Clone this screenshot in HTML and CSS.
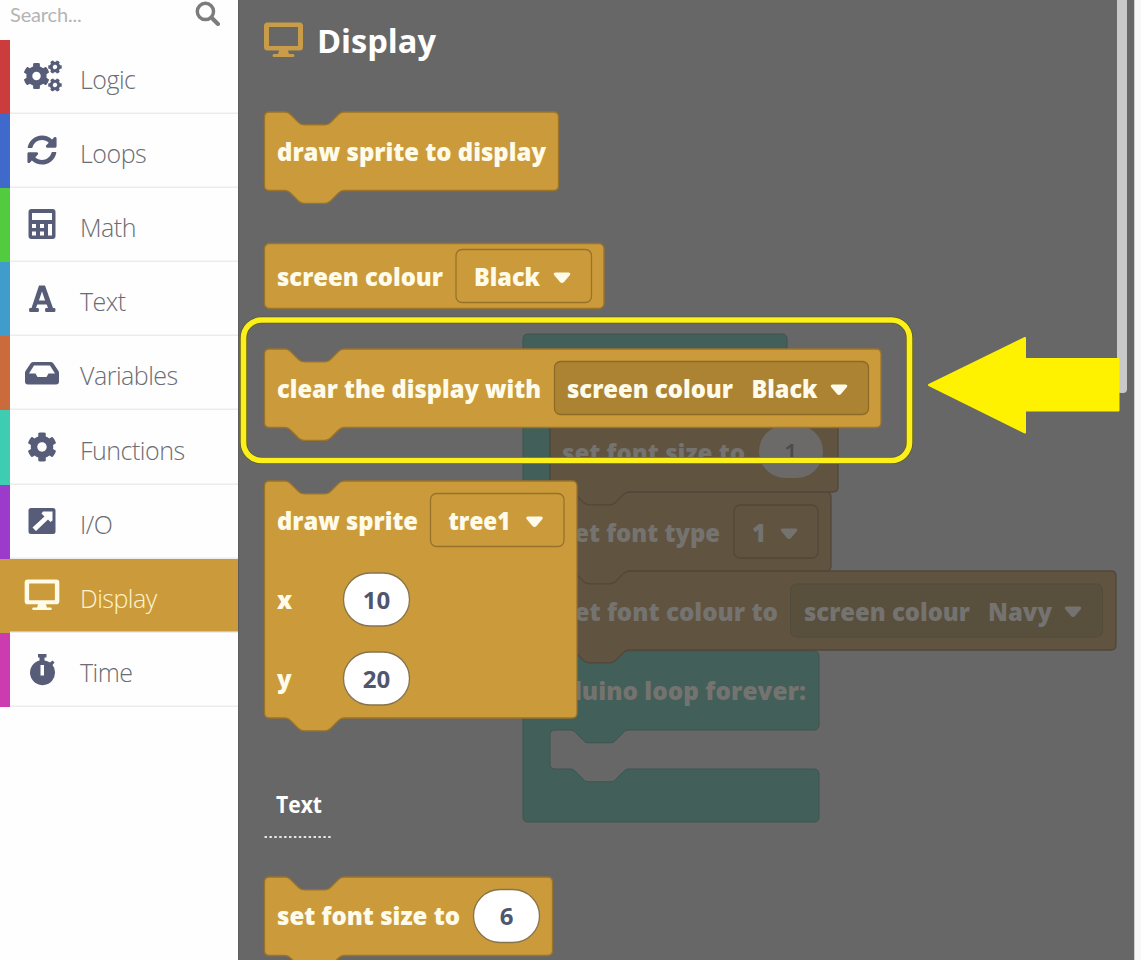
FILE: index.html
```html
<!DOCTYPE html>
<html lang="en">
<head>
<meta charset="utf-8">
<title>Block editor</title>
<link rel="stylesheet" href="styles.css">
</head>
<body>
<svg class="defs" width="0" height="0" aria-hidden="true">
  <symbol id="cog" viewBox="0 0 512 512"><path d="M487.4 315.7l-42.6-24.6c4.3-23.2 4.3-47 0-70.2l42.6-24.6c4.9-2.8 7.1-8.6 5.5-14-11.1-35.6-30-67.8-54.7-94.6-3.8-4.1-10-5.1-14.8-2.3L380.8 110c-17.9-15.4-38.5-27.3-60.8-35.1V25.8c0-5.6-3.9-10.5-9.4-11.7-36.7-8.2-74.3-7.8-109.2 0-5.5 1.2-9.4 6.1-9.4 11.7V75c-22.2 7.9-42.8 19.8-60.8 35.1L88.7 85.5c-4.9-2.8-11-1.9-14.8 2.3-24.7 26.7-43.6 58.9-54.7 94.6-1.7 5.4.6 11.2 5.5 14L67.3 221c-4.3 23.2-4.3 47 0 70.2l-42.6 24.6c-4.9 2.8-7.1 8.6-5.5 14 11.1 35.6 30 67.8 54.7 94.6 3.8 4.1 10 5.1 14.8 2.3l42.6-24.6c17.9 15.4 38.5 27.3 60.8 35.1v49.2c0 5.6 3.9 10.5 9.4 11.7 36.7 8.2 74.3 7.8 109.2 0 5.5-1.2 9.4-6.1 9.4-11.7v-49.2c22.2-7.9 42.8-19.8 60.8-35.1l42.6 24.6c4.9 2.8 11 1.9 14.8-2.3 24.7-26.7 43.6-58.9 54.7-94.6 1.5-5.5-.7-11.3-5.6-14.1zM256 336c-44.1 0-80-35.9-80-80s35.9-80 80-80 80 35.9 80 80-35.9 80-80 80z"/></symbol>
  <symbol id="monitor" viewBox="0 0 40 36"><path fill-rule="evenodd" d="M4 0.500H36Q39.500 0.500 39.500 4V25Q39.500 28.500 36 28.500H24.500L25.500 32H29.500Q31 32 31 33.500T29.500 35H10.500Q9 35 9 33.500T10.500 32H14.500L15.500 28.500H4Q0.500 28.500 0.500 25V4Q0.500 0.500 4 0.500ZM5.500 5V24H34.500V5Z"/></symbol>
  <symbol id="caret" viewBox="0 0 18 12"><path d="M2.500 .5H15.500Q18.500 .8 16.500 3.500L11 10Q9 12.200 7 10L1.500 3.500Q-.5 .8 2.500 .5Z"/></symbol>
</svg>
<div class="app">
  <aside class="sidebar">
    <div class="search">
      <span class="search-text">Search...</span>
      <svg class="search-icon" viewBox="0 0 24 24"><circle cx="10" cy="10" r="7.800" fill="none" stroke="#7c7c7c" stroke-width="3.300"/><path d="M16 16L22 22" stroke="#7c7c7c" stroke-width="4" stroke-linecap="round"/></svg>
    </div>
    <nav class="categories">
      <div class="category red"><svg class="icon" viewBox="0 0 40 32"><use href="#cog" x="1" y="2.500" width="27" height="27"/><g transform="rotate(30 33 7)"><use href="#cog" x="26" y="0" width="14" height="14"/></g><g transform="rotate(30 33 25)"><use href="#cog" x="26" y="18" width="14" height="14"/></g></svg><span>Logic</span></div>
      <div class="category blue"><svg class="icon" viewBox="-84 -9 680 530"><path d="M370.720 133.280C339.458 104.008 298.888 87.962 255.848 88c-77.458.068-144.328 53.178-162.791 126.850-1.344 5.363-6.122 9.150-11.651 9.150H24.103c-7.498 0-13.194-6.807-11.807-14.176C33.933 94.924 134.813 8 256 8c66.448 0 126.791 26.136 171.315 68.685L463.030 40.970C478.149 25.851 504 36.559 504 57.941V192c0 13.255-10.745 24-24 24H345.941c-21.382 0-32.090-25.851-16.971-40.971zM32 296h134.059c21.382 0 32.090 25.851 16.971 40.971l-41.750 41.750c31.262 29.273 71.835 45.319 114.876 45.280 77.418-.07 144.315-53.144 162.787-126.849 1.344-5.363 6.122-9.150 11.651-9.150h57.304c7.498 0 13.194 6.807 11.807 14.176C478.067 417.076 377.187 504 256 504c-66.448 0-126.791-26.136-171.315-68.685L48.970 471.030C33.851 486.149 8 475.441 8 454.059V320c0-13.255 10.745-24 24-24z"/></svg><span>Loops</span></div>
      <div class="category green"><svg class="icon" viewBox="0 0 40 32"><path fill-rule="evenodd" d="M9.500 1H30.500Q33.500 1 33.500 4V28Q33.500 31 30.500 31H9.500Q6.500 31 6.500 28V4Q6.500 1 9.500 1ZM10 5V12H30V5ZM10 16V20H14V16ZM18 16V20H22V16ZM10 23.500V27.500H14V23.500ZM18 23.500V27.500H22V23.500ZM26 16V27.500H30V16Z"/></svg><span>Math</span></div>
      <div class="category sky"><svg class="icon" viewBox="0 0 40 32"><path fill-rule="evenodd" d="M17 2.500H23L31 25H32.500Q33.500 25 33.500 27T32.500 29H24Q23 29 23 27T24 25H26L24.700 21.500H15.300L14 25H16Q17 25 17 27T16 29H8Q7 29 7 27T8 25H9.500ZM20 8.500L16.900 17.500H23.100Z"/></svg><span>Text</span></div>
      <div class="category orange"><svg class="icon" viewBox="0 0 40 32"><path fill-rule="evenodd" d="M11 5H29Q30.500 5 31.500 6.500L36.500 14Q37 15 37 16V24.500Q37 27.500 34 27.500H6Q3 27.500 3 24.500V16Q3 15 3.500 14L8.500 6.500Q9.500 5 11 5ZM12 8.500L7 16.500H13.500L15.500 20H24.500L26.500 16.500H33L28 8.500Z"/></svg><span>Variables</span></div>
      <div class="category mint"><svg class="icon" viewBox="0 0 40 32"><use href="#cog" x="5" y="1" width="30" height="30"/></svg><span>Functions</span></div>
      <div class="category purple"><svg class="icon" viewBox="0 0 40 32"><path fill-rule="evenodd" d="M9 3H31Q33.500 3 33.500 5.500V26.500Q33.500 29 31 29H9Q6.500 29 6.500 26.500V5.500Q6.500 3 9 3ZM21 6.500L19.500 8.500L22.500 11.500L10.500 22.500L14 26L26 14.500L28.500 17L30.500 15.500V6.500Z"/></svg><span>I/O</span></div>
      <div class="category selected"><svg class="icon" viewBox="0 0 40 32"><use href="#monitor" x="2" y="0" width="36" height="32"/></svg><span>Display</span></div>
      <div class="category pink"><svg class="icon" viewBox="0 0 40 32"><path fill-rule="evenodd" d="M16 0H24.500V3.500H22.500V6.500Q25.500 7 28 8.500L30.500 6.500L32.500 8.500L30.500 11Q33 14 33 18A12.500 12.500 0 1 1 17.500 6.500V3.500H16ZM18.500 11V21.500H22V11Z"/></svg><span>Time</span></div>
    </nav>
  </aside>
  <main class="stage">
    <svg class="canvas" viewBox="238 0 903 960">
      <g class="dim">
        <path class="teal" d="M523 339q0-5 5-5H782q5 0 5 5V412H550V651H814q5 0 5 5V725q0 5-5 5H629c-3 0-4 1-5.500 2.500l-8 8c-1.500 1.500-2.500 2.300-5.500 2.300h-21c-3 0-4-.8-5.500-2.300l-8-8c-1.500-1.500-2.500-2.500-5.500-2.500H555q-5 0-5 5V764q0 5 5 5H570c3 0 4 1 5.500 2.500l8 8c1.500 1.500 2.500 2.300 5.500 2.300h21c3 0 4-.8 5.500-2.300l8-8c1.500-1.500 2.500-2.500 5.500-2.500H814q5 0 5 5V817q0 5-5 5H528q-5 0-5-5Z"/>
        <path class="brown" d="M550 576q0-5 5-5H1111q5 0 5 5V645q0 5-5 5H629c-3 0-4 1-5.500 2.500l-8 8c-1.500 1.500-2.500 2.300-5.500 2.300h-21c-3 0-4-.8-5.500-2.300l-8-8c-1.500-1.500-2.500-2.500-5.500-2.500H555q-5 0-5-5Z"/>
        <path class="brown" d="M550 497q0-5 5-5H826q5 0 5 5V566q0 5-5 5H629c-3 0-4 1-5.500 2.500l-8 8c-1.500 1.500-2.500 2.300-5.500 2.300h-21c-3 0-4-.8-5.500-2.300l-8-8c-1.500-1.500-2.500-2.500-5.500-2.500H555q-5 0-5-5Z"/>
        <path class="brown" d="M550 417q0-5 5-5H833q5 0 5 5V487q0 5-5 5H629c-3 0-4 1-5.500 2.500l-8 8c-1.500 1.500-2.500 2.300-5.500 2.300h-21c-3 0-4-.8-5.500-2.300l-8-8c-1.500-1.500-2.500-2.500-5.500-2.500H555q-5 0-5-5Z"/>
        <text x="562" y="462" textLength="183" lengthAdjust="spacingAndGlyphs">set font size to</text>
        <rect class="dim-pill" x="759" y="425" width="64" height="53" rx="26.500"/>
        <text class="dim-num" x="784" y="461">1</text>
        <text x="562" y="541.500" textLength="158" lengthAdjust="spacingAndGlyphs">set font type</text>
        <rect class="dim-field" x="734" y="505" width="84" height="53" rx="6"/>
        <text x="752" y="541.500">1</text>
        <use href="#caret" x="780" y="528" width="18" height="12"/>
        <text x="562" y="621" textLength="216" lengthAdjust="spacingAndGlyphs">set font colour to</text>
        <rect class="dim-shadow" x="790.500" y="584" width="312" height="53" rx="6"/>
        <text x="804" y="621" textLength="166" lengthAdjust="spacingAndGlyphs">screen colour</text>
        <text x="988" y="621" textLength="64" lengthAdjust="spacingAndGlyphs">Navy</text>
        <use href="#caret" x="1064" y="606" width="18" height="12"/>
        <text x="537" y="700" textLength="269" lengthAdjust="spacingAndGlyphs">Arduino loop forever:</text>
      </g>

      <rect class="scroll-thumb" x="1117" y="-10" width="10" height="403" rx="4"/>
      <rect class="gutter" x="1134" y="0" width="7" height="960"/>
      <path class="gutter-line" d="M1134.500 0V960"/>
      <path class="seam" d="M238.500 0V960"/>

      <use class="heading-icon" href="#monitor" x="263.500" y="22" width="40" height="36"/>
      <text class="heading" x="317" y="52.500" textLength="119" lengthAdjust="spacingAndGlyphs">Display</text>

      <g class="blocks">
        <path class="block" d="M264.500 117q0-5 5-5H285c3 0 4 1 5.500 2.500l8 8c1.500 1.500 2.500 2.300 5.500 2.300h21c3 0 4-.8 5.500-2.300l8-8c1.500-1.500 2.500-2.500 5.500-2.500H553.500q5 0 5 5V185.500q0 5-5 5H344c-3 0-4 1-5.500 2.500l-8 8c-1.500 1.500-2.500 2.300-5.500 2.300h-21c-3 0-4-.8-5.500-2.300l-8-8c-1.500-1.500-2.500-2.500-5.500-2.500H269.500q-5 0-5-5Z"/>
        <text x="277" y="160.500" textLength="269" lengthAdjust="spacingAndGlyphs">draw sprite to display</text>

        <rect class="block" x="264.500" y="243.500" width="339.500" height="65" rx="5"/>
        <text x="277" y="285.500" textLength="166" lengthAdjust="spacingAndGlyphs">screen colour</text>
        <rect class="field" x="456" y="249.500" width="135.500" height="53" rx="6"/>
        <text x="474" y="285.500" textLength="66" lengthAdjust="spacingAndGlyphs">Black</text>
        <use href="#caret" x="553" y="272" width="18" height="12"/>

        <path class="block" d="M264.500 354q0-5 5-5H285c3 0 4 1 5.500 2.500l8 8c1.500 1.500 2.500 2.300 5.500 2.300h21c3 0 4-.8 5.500-2.300l8-8c1.500-1.500 2.500-2.500 5.500-2.500H876q5 0 5 5V422.500q0 5-5 5H344c-3 0-4 1-5.500 2.500l-8 8c-1.500 1.500-2.500 2.300-5.500 2.300h-21c-3 0-4-.8-5.500-2.300l-8-8c-1.500-1.500-2.500-2.500-5.500-2.500H269.500q-5 0-5-5Z"/>
        <text x="277" y="398" textLength="264" lengthAdjust="spacingAndGlyphs">clear the display with</text>
        <rect class="shadow-field" x="554.500" y="361.500" width="314" height="53" rx="6"/>
        <text x="567" y="398" textLength="166" lengthAdjust="spacingAndGlyphs">screen colour</text>
        <text x="751.500" y="398" textLength="66" lengthAdjust="spacingAndGlyphs">Black</text>
        <use href="#caret" x="830" y="384" width="18" height="12"/>

        <path class="block" d="M264.500 486q0-5 5-5H285c3 0 4 1 5.500 2.500l8 8c1.500 1.500 2.500 2.300 5.500 2.300h21c3 0 4-.8 5.500-2.300l8-8c1.500-1.500 2.500-2.500 5.500-2.500H572q5 0 5 5V713q0 5-5 5H344c-3 0-4 1-5.500 2.500l-8 8c-1.500 1.500-2.500 2.300-5.500 2.300h-21c-3 0-4-.8-5.500-2.300l-8-8c-1.500-1.500-2.500-2.500-5.500-2.500H269.500q-5 0-5-5Z"/>
        <text x="277" y="529.500" textLength="141" lengthAdjust="spacingAndGlyphs">draw sprite</text>
        <rect class="field" x="430.500" y="493.500" width="133.500" height="53" rx="6"/>
        <text x="448.500" y="529.500" textLength="62" lengthAdjust="spacingAndGlyphs">tree1</text>
        <use href="#caret" x="525.500" y="516" width="18" height="12"/>
        <text x="277" y="609">x</text>
        <rect class="pill" x="343.500" y="573" width="66" height="53" rx="26.500"/>
        <text class="num" x="376.500" y="609">10</text>
        <text x="277" y="688">y</text>
        <rect class="pill" x="343.500" y="652" width="66" height="53" rx="26.500"/>
        <text class="num" x="376.500" y="688">20</text>

        <text class="section" x="276" y="813" textLength="46" lengthAdjust="spacingAndGlyphs">Text</text>
        <path class="dots" d="M264.500 837H331"/>

        <path class="block" d="M264.500 882q0-5 5-5H285c3 0 4 1 5.500 2.500l8 8c1.500 1.500 2.500 2.300 5.500 2.300h21c3 0 4-.8 5.500-2.300l8-8c1.500-1.500 2.500-2.500 5.500-2.500H547.500q5 0 5 5V950.500q0 5-5 5H344c-3 0-4 1-5.500 2.500l-8 8h-32l-8-8c-1.500-1.500-2.500-2.500-5.500-2.500H269.500q-5 0-5-5Z"/>
        <text x="277" y="925" textLength="183" lengthAdjust="spacingAndGlyphs">set font size to</text>
        <rect class="pill" x="473.500" y="889.500" width="66" height="53" rx="26.500"/>
        <text class="num" x="506.500" y="925">6</text>
      </g>

      <rect class="callout-edge" x="243.500" y="320" width="666" height="140.500" rx="18"/>
      <rect class="callout" x="243.500" y="320" width="666" height="140.500" rx="18"/>
      <path class="arrow" d="M929 385L1025 338V359H1118.500V410.500H1025V432.500Z"/>
    </svg>
  </main>
</div>
</body>
</html>
```
FILE: styles.css
```css
body {
  margin: 0;
  background: #fff;
  overflow: hidden;
}

.defs {
  position: absolute;
}

.app {
  display: flex;
  width: 1141px;
  height: 960px;
}

.sidebar {
  width: 238px;
  flex: none;
  background: #fefefe;
}

.search {
  display: flex;
  justify-content: space-between;
  box-sizing: border-box;
  height: 39.5px;
  padding: 1px 18px 0 10px;
}

.search-text {
  font: 20px/27px Lato, sans-serif;
  letter-spacing: -0.15px;
  color: #b4b4b4;
}

.search-icon {
  width: 25px;
  height: 25px;
}

.categories {
  display: grid;
  grid-template-rows: repeat(9, 74.2px);
}

.category {
  display: flex;
  align-items: center;
  box-sizing: border-box;
  padding-left: 12px;
  border-left: 10px solid;
  box-shadow: inset 0 -1.5px #ececee;
}

.category .icon {
  width: 40px;
  height: 32px;
  margin: 0 18px 1px 0;
  fill: #575d78;
}

.category span {
  padding-top: 4px;
  font: 300 25px/34px "Open Sans", "Noto Sans", sans-serif;
  letter-spacing: -0.5px;
  color: #6b6c74;
}

.red { border-left-color: #cc3c3c; }
.blue { border-left-color: #3f6acc; }
.green { border-left-color: #52cc3e; }
.sky { border-left-color: #409ccb; }
.orange { border-left-color: #cb6a3b; }
.mint { border-left-color: #3eccb2; }
.purple { border-left-color: #9b3acb; }
.pink { border-left-color: #cc3bb0; }

.selected {
  border-color: #cb9b3b;
  background: #cb9b3b;
}

.selected .icon { fill: #fffbe9; }
.category.selected span { color: #fff3cf; }

.stage {
  flex: none;
  width: 903px;
  height: 960px;
  background: #676767;
}

.canvas {
  display: block;
  width: 903px;
  height: 960px;
  font: 800 24px "Open Sans", "Noto Sans", sans-serif;
}

.teal {
  fill: #435f59;
  stroke: #3c544f;
}

.brown {
  fill: #605340;
  stroke: #51473a;
  stroke-width: 1.3px;
}

.dim { fill: #757370; }
.dim-pill { fill: #6b6a68; }
.dim-num { fill: #4a4b50; font-weight: 600; }

.dim-field {
  fill: none;
  stroke: #524839;
  stroke-width: 1.3px;
}

.dim-shadow {
  fill: #584f3d;
  stroke: #534b3c;
}

.scroll-thumb { fill: #c9c9c9; }
.gutter { fill: #f8f8f8; }
.gutter-line { stroke: #d0d0d0; }
.seam { stroke: #5c5c5c; }
.heading-icon { fill: #c89c48; }

.heading {
  font-size: 33px;
  font-weight: 700;
  fill: #fff;
}

.blocks { fill: #fffbea; }

.block {
  fill: #cb9b3b;
  stroke: #9b742a;
  stroke-width: 1.3px;
}

.field {
  fill: none;
  stroke: #97722b;
  stroke-width: 1.3px;
}

.shadow-field {
  fill: #ac8332;
  stroke: #8d6a26;
  stroke-width: 1.3px;
}

.pill {
  fill: #fff;
  stroke: #86744c;
  stroke-width: 1.3px;
}

.num {
  font-weight: 700;
  fill: #51566f;
  text-anchor: middle;
}

.section {
  font-weight: 700;
  fill: #fff;
}

.dots {
  stroke: #e4e4e4;
  stroke-width: 2px;
  stroke-dasharray: 2.5 2.4;
}

.callout-edge {
  fill: none;
  stroke: #5d5a20;
  stroke-width: 7px;
}

.callout {
  fill: none;
  stroke: #fbf01a;
  stroke-width: 5.6px;
}

.arrow {
  fill: #fff200;
  stroke: #fff200;
  stroke-width: 2px;
  stroke-linejoin: round;
}
```
